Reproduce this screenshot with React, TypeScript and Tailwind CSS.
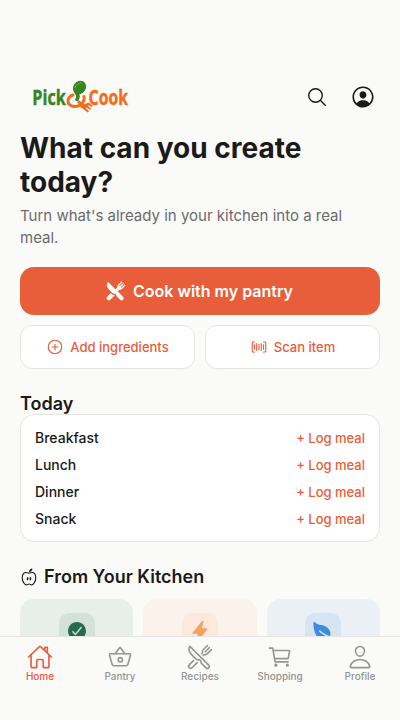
import React from "react";
import {
  IoAddCircleOutline, IoBarcodeOutline, IoBasketOutline, IoCartOutline, IoCheckmarkCircle, IoFlash,
  IoHomeOutline, IoLeaf, IoNutritionOutline, IoPersonCircleOutline, IoPersonOutline, IoRestaurant,
  IoRestaurantOutline, IoSearchOutline,
} from "react-icons/io5";

function Logo() {
  return (
    <svg className="overflow-visible" width="104" height="36" viewBox="0 0 104 36" aria-label="Pick & Cook">
      <g fontFamily="'Open Sans', sans-serif" fontWeight="700" fontSize="20.5" strokeWidth="0.4">
        <text transform="translate(0.3 25.8) scale(0.79 1)" fill="#34861f" stroke="#34861f">Pick</text>
        <text transform="translate(56.6 25.8) scale(0.77 1)" fill="#f36b1c" stroke="#f36b1c">Cook</text>
      </g>
      <path d="M41 16C34.5 18 34.5 25.5 40 27C47 29 53 24 52 17.5" fill="none" stroke="#f36b1c" strokeWidth="3" strokeLinecap="round" />
      <path d="M46 22.5L52 26.5" fill="none" stroke="#f36b1c" strokeWidth="3" />
      <path d="M47.8 27.5L56.5 23.5L60.5 26.8L59.5 28L56.6 26.2L55.8 27.1L59 29.5L58 30.8L54.7 28.5L53.8 29.3L57 32.2L55.8 33.6Z" fill="#f36b1c" />
      <ellipse cx="47.5" cy="8.5" rx="6.2" ry="7.2" transform="rotate(38 47.5 8.5)" fill="#34861f" />
      <path d="M44 12C44.5 16 48 16 45 20.5" fill="none" stroke="#34861f" strokeWidth="3.5" strokeLinecap="round" />
      <path d="M43 9C43.5 5.5 46.5 4 49.5 4" fill="none" stroke="#78ac5c" strokeWidth="1" />
    </svg>
  );
}

const meals = ["Breakfast", "Lunch", "Dinner", "Snack"];
const cards = [
  { Icon: IoCheckmarkCircle, card: "bg-[#e8eeea]", tile: "bg-[#d3e1da]", color: "text-[#286a50]" },
  { Icon: IoFlash, card: "bg-[#faf2eb]", tile: "bg-[#fce8dd]", color: "text-[#f4a261]" },
  { Icon: IoLeaf, card: "bg-[#ebf0f4]", tile: "bg-[#d7e5f2]", color: "text-[#3f8bdd]" },
];
const tabs = [
  { Icon: IoHomeOutline, label: "Home", style: "text-[#e85d3a]" },
  { Icon: IoBasketOutline, label: "Pantry", style: "text-[#969693]" },
  { Icon: IoRestaurantOutline, label: "Recipes", style: "text-[#969693]" },
  { Icon: IoCartOutline, label: "Shopping", style: "text-[#969693]" },
  { Icon: IoPersonOutline, label: "Profile", style: "text-[#969693]" },
];

export default function App() {
  return (
    <div className="flex h-[720px] w-[400px] flex-col overflow-hidden bg-[#fafaf8] font-['Inter',sans-serif] text-[#1a1a1a]">
      <main className="min-h-0 flex-1 overflow-hidden px-5 pt-[79px]">
        <header className="flex h-9 items-center justify-between pr-1 pl-3">
          <Logo />
          <div className="flex items-center gap-[22px]">
            <IoSearchOutline size={22} />
            <IoPersonCircleOutline size={26} />
          </div>
        </header>
        <h1 className="mt-4 text-[28px] leading-[34px] font-bold">What can you create today?</h1>
        <p className="mt-1.5 text-[15px] leading-[22px] text-[#6b6b6b]">Turn what's already in your kitchen into a real meal.</p>
        <button className="mt-[18px] flex h-12 w-full items-center justify-center gap-[7px] rounded-[14px] bg-[#e85d3a] pr-px text-base font-semibold text-white">
          <IoRestaurant size={20} />Cook with my pantry
        </button>
        <div className="mt-2.5 grid grid-cols-2 gap-2.5 text-[13px] font-medium text-[#e85d3a]">
          <button className="flex h-11 items-center justify-center gap-1.5 rounded-xl border border-[#e5e5e2] bg-white"><IoAddCircleOutline size={18} /><span className="pt-px">Add ingredients</span></button>
          <button className="flex h-11 items-center justify-center gap-1.5 rounded-xl border border-[#e5e5e2] bg-white"><IoBarcodeOutline size={18} /><span className="pt-px">Scan item</span></button>
        </div>
        <h2 className="mt-6 text-lg leading-[21px] font-semibold">Today</h2>
        <section className="flex h-32 flex-col rounded-[14px] border border-[#e5e5e2] bg-white px-3.5 pt-[9px]">
          {meals.map((meal) => (
            <div key={meal} className="flex h-[27px] shrink-0 items-center justify-between text-sm font-medium">
              {meal}
              <span className="pt-px text-[13px] text-[#e85d3a]">+ Log meal</span>
            </div>
          ))}
        </section>
        <h2 className="mt-6 flex h-[22px] items-center gap-1.5 text-lg leading-[22px] font-semibold"><IoNutritionOutline size={18} />From Your Kitchen</h2>
        <div className="mt-[11px] grid grid-cols-3 gap-2.5">
          {cards.map(({ Icon, card, tile, color }) => (
            <div key={color} className={`flex h-28 justify-center rounded-[14px] pt-3.5 ${card}`}>
              <div className={`flex size-9 items-center justify-center rounded-[10px] ${tile} ${color}`}><Icon size={22} /></div>
            </div>
          ))}
        </div>
      </main>
      <nav className="flex h-[84px] shrink-0 border-t border-[#e5e5e2] bg-[#fafaf8] pt-[7px]">
        {tabs.map(({ Icon, label, style }) => (
          <div key={label} className={`flex w-20 flex-col items-center text-[10px] leading-[12px] font-medium ${style}`}>
            <Icon size={26} />{label}
          </div>
        ))}
      </nav>
    </div>
  );
}
